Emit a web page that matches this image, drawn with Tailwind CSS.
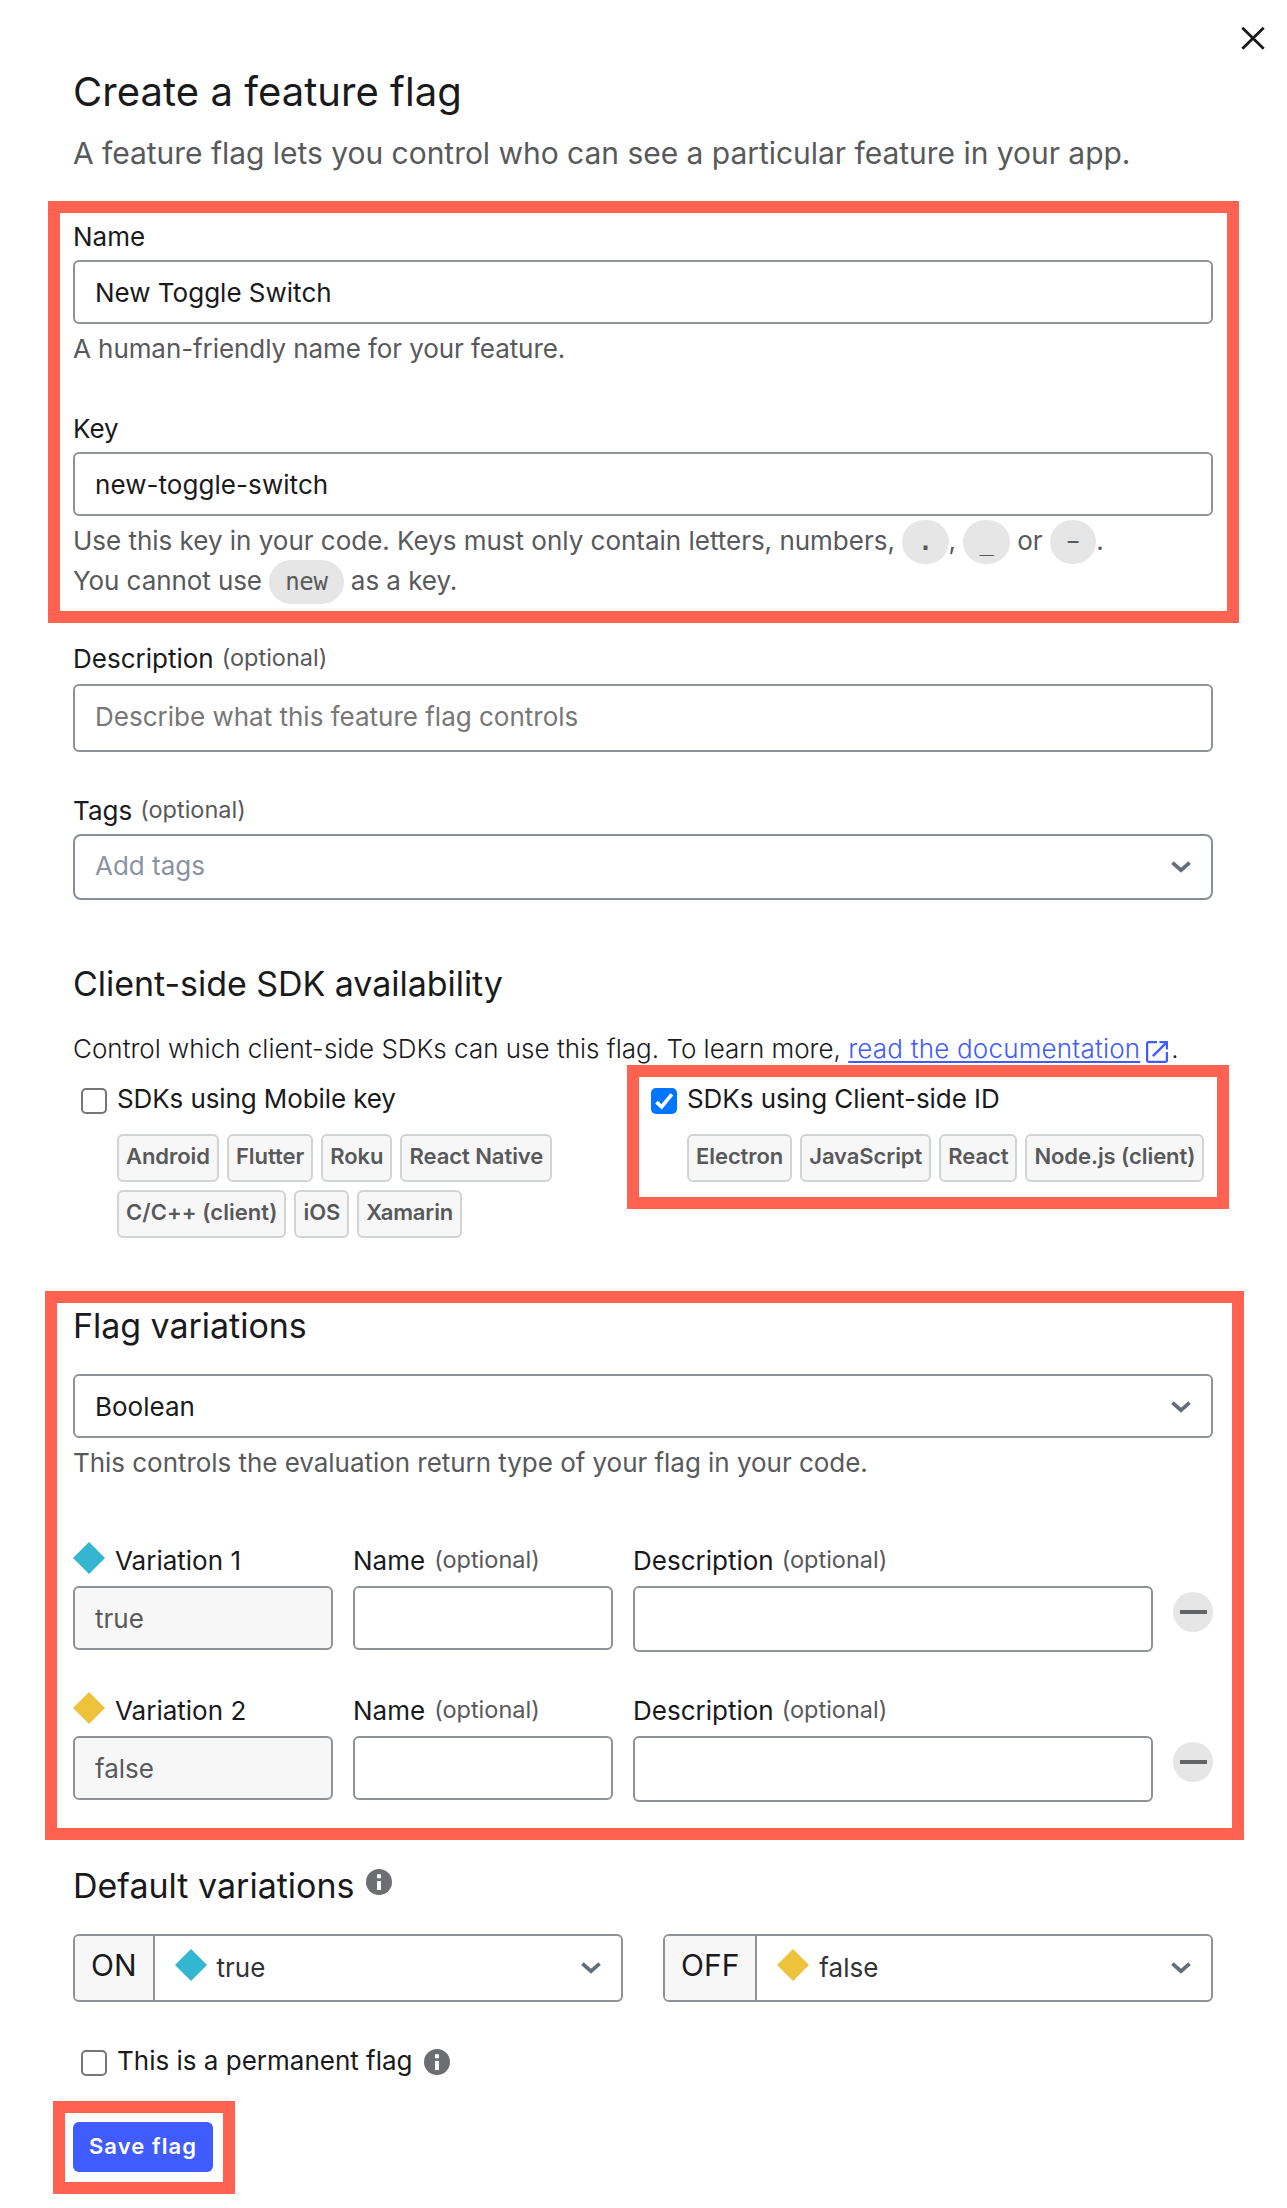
<!DOCTYPE html>
<html lang="en">
<head>
<meta charset="utf-8">
<title>Create a feature flag</title>
<script src="https://cdn.jsdelivr.net/npm/@tailwindcss/browser@4"></script>
</head>
<body class="relative h-[2208px] w-[1287px] overflow-hidden bg-white font-['Inter',sans-serif] text-[26px] leading-[31px] text-[#1a1a1c]">

<!-- Shared icons -->
<svg class="hidden">
  <symbol id="chevron" viewBox="0 0 20 12"><path d="M1.4 1.6 10 9.2l8.6-7.6" fill="none" stroke="#646d7a" stroke-width="3.7"/></symbol>
  <symbol id="diamond" viewBox="0 0 32 32"><path d="M16 0 32 16 16 32 0 16z" fill="currentColor"/></symbol>
  <symbol id="info" viewBox="0 0 26 26"><circle cx="13" cy="13" r="13" fill="#6d6e72"/><path d="M11 5.2h4v4h-4zM11 12h4v9h-4z" fill="#fff"/></symbol>
</svg>

<button class="absolute top-[26px] left-[1240px] h-[25px] w-[26px]" aria-label="Close">
  <svg class="block h-full w-full" viewBox="0 0 26 25"><path d="M2.3 1.8 23.7 22.7M23.7 1.8 2.3 22.7" stroke="#1a1a1c" stroke-width="2.8" fill="none"/></svg>
</button>

<main class="flex w-[1213px] flex-col pt-[67px] pl-[73px]">
  <h1 class="text-[40px] leading-[49px] tracking-[0.05px]">Create a feature flag</h1>
  <p class="mt-[19px] text-[30px] leading-9 tracking-[-0.03px] text-[#58595b]">A feature flag lets you control who can see a particular feature in your app.</p>

  <label class="mt-[50px]">Name</label>
  <input class="mt-2 h-16 rounded-md border-2 border-[#8f9398] bg-white px-5 pt-px" value="New Toggle Switch">
  <p class="mt-[9px] tracking-[-0.08px] text-[#58595b]">A human-friendly name for your feature.</p>

  <label class="mt-[49px]">Key</label>
  <input class="mt-2 h-16 rounded-md border-2 border-[#8f9398] bg-white px-5 pt-px tracking-[0.06px]" value="new-toggle-switch">
  <p class="mt-[5px] h-[79px] leading-10 whitespace-nowrap text-[#58595b]"><span class="tracking-[-0.015px]">Use this key in your code. Keys must only contain letters, numbers, </span><code class="rounded-full bg-[#e6e6e6] px-4 py-2 font-['DejaVu_Sans_Mono',monospace] text-2xl leading-0 font-bold">.</code>, <code class="rounded-full bg-[#e6e6e6] px-4 py-2 font-['DejaVu_Sans_Mono',monospace] text-2xl leading-0">_</code> or <code class="rounded-full bg-[#e6e6e6] px-4 py-2 font-['DejaVu_Sans_Mono',monospace] text-2xl leading-0"><span class="inline-block -translate-y-px scale-x-[1.75]">-</span></code>.<br><span class="tracking-[-0.08px]">You cannot use </span><code class="rounded-full bg-[#e6e6e6] px-4 py-2 font-['DejaVu_Sans_Mono',monospace] text-2xl leading-0 tracking-[-0.3px]">new</code><span class="tracking-[-0.05px]"> as a key.</span></p>

  <label class="mt-[43px] flex gap-2">Description <span class="text-[23.5px] leading-[29px] text-[#58595b]">(optional)</span></label>
  <input class="mt-2.5 h-[68px] rounded-md border-2 border-[#8f9398] bg-white px-5 pb-[3px] placeholder:text-[#777]" placeholder="Describe what this feature flag controls">

  <label class="mt-[43px] flex gap-2">Tags <span class="text-[23.5px] leading-[29px] text-[#58595b]">(optional)</span></label>
  <div class="mt-2 flex h-[66px] items-center justify-between rounded-lg border-2 border-[#868f9c] pr-5 pl-5">
    <span class="pb-[3px] text-[#8b93a1]">Add tags</span>
    <svg class="h-3 w-5"><use href="#chevron"/></svg>
  </div>

  <h2 class="mt-[63px] text-[34px] leading-[41px] tracking-[-0.04px]">Client-side SDK availability</h2>
  <p class="mt-[29px] h-[31px] font-light whitespace-nowrap">Control which client-side SDKs can use this flag. To learn more, <a class="tracking-[0.2px] text-[#405bff] underline decoration-2 underline-offset-[3px]">read the documentation</a><svg class="ml-1.5 inline-block h-[22px] w-[22px] align-[-5px]" viewBox="3 3 18 18"><path fill="#405bff" d="M19.2 19.2H4.8V4.8H12V3H5a2 2 0 0 0-2 2v14a2 2 0 0 0 2 2h14c1.1 0 2-.9 2-2v-7h-1.800zM14 3v1.800h3.800L7.900 14.700l1.400 1.400L19.200 6.200V10H21V3z"/></svg><span class="ml-[3px]">.</span></p>

  <div class="mt-[19px] grid grid-cols-2">
    <div>
      <label class="flex gap-2.5 pl-2"><span class="mt-[5px] h-[26px] w-[26px] rounded-[5px] border-2 border-[#767676]"></span><span class="tracking-[-0.1px]">SDKs using Mobile key</span></label>
      <div class="mt-5 flex flex-wrap gap-2 pl-11 text-[22px] leading-[26px] font-semibold tracking-[-0.05px] text-[#58595b]">
        <span class="h-12 rounded-md border-2 border-[#d1d4d4] bg-[#f7f7f7] px-[7px] pt-[7px]">Android</span>
        <span class="h-12 rounded-md border-2 border-[#d1d4d4] bg-[#f7f7f7] px-[7px] pt-[7px]">Flutter</span>
        <span class="h-12 rounded-md border-2 border-[#d1d4d4] bg-[#f7f7f7] px-[7px] pt-[7px]">Roku</span>
        <span class="h-12 rounded-md border-2 border-[#d1d4d4] bg-[#f7f7f7] px-[7px] pt-[7px]">React Native</span>
        <span class="h-12 rounded-md border-2 border-[#d1d4d4] bg-[#f7f7f7] px-[7px] pt-[7px] tracking-[0.05px]">C/C++ (client)</span>
        <span class="h-12 rounded-md border-2 border-[#d1d4d4] bg-[#f7f7f7] px-[7px] pt-[7px]">iOS</span>
        <span class="h-12 rounded-md border-2 border-[#d1d4d4] bg-[#f7f7f7] px-[7px] pt-[7px] tracking-[-0.15px]">Xamarin</span>
      </div>
    </div>
    <div>
      <label class="flex gap-2.5 pl-2"><span class="mt-[5px] h-[26px] w-[26px] rounded-[5px] bg-[#0075ff]"><svg class="block" viewBox="0 0 26 26"><path d="M5.400 14.200l5.200 4.700L20.800 6.300" fill="none" stroke="#fff" stroke-width="3.700"/></svg></span><span class="tracking-[-0.06px]">SDKs using Client-side ID</span></label>
      <div class="mt-5 flex flex-wrap gap-2 pl-11 text-[22px] leading-[26px] font-semibold tracking-[-0.07px] text-[#58595b]">
        <span class="h-12 rounded-md border-2 border-[#d1d4d4] bg-[#f7f7f7] px-[7px] pt-[7px]">Electron</span>
        <span class="h-12 rounded-md border-2 border-[#d1d4d4] bg-[#f7f7f7] px-[7px] pt-[7px]">JavaScript</span>
        <span class="h-12 rounded-md border-2 border-[#d1d4d4] bg-[#f7f7f7] px-[7px] pt-[7px]">React</span>
        <span class="h-12 rounded-md border-2 border-[#d1d4d4] bg-[#f7f7f7] px-[7px] pt-[7px]">Node.js (client)</span>
      </div>
    </div>
  </div>

  <h2 class="mt-[67px] text-[34px] leading-[41px] tracking-[-0.04px]">Flag variations</h2>
  <div class="mt-7 flex h-16 items-center justify-between rounded-md border-2 border-[#8f9398] px-5 pt-px">
    <span>Boolean</span>
    <svg class="h-3 w-5"><use href="#chevron"/></svg>
  </div>
  <p class="mt-[9px] tracking-[-0.04px] text-[#58595b]">This controls the evaluation return type of your flag in your code.</p>

  <div class="mt-[67px] flex gap-5">
    <div class="flex w-[260px] flex-col">
      <label class="flex h-[31px] gap-2.5"><svg class="-mt-[3px] h-8 w-8 text-[#34b5d0]"><use href="#diamond"/></svg>Variation 1</label>
      <input class="mt-2.5 h-16 rounded-md border-2 border-[#8f9398] bg-[#f7f7f7] px-5 pt-px text-[#58595b]" value="true">
    </div>
    <div class="flex w-[260px] flex-col">
      <label class="flex gap-[9px]">Name <span class="text-[23.5px] leading-[29px] text-[#58595b]">(optional)</span></label>
      <input class="mt-2.5 h-16 rounded-md border-2 border-[#8f9398] bg-white px-5">
    </div>
    <div class="flex w-[520px] flex-col">
      <label class="flex gap-2">Description <span class="text-[23.5px] leading-[29px] text-[#58595b]">(optional)</span></label>
      <input class="mt-2.5 h-[66px] rounded-md border-2 border-[#8f9398] bg-white px-5">
    </div>
    <button class="mt-[47px] flex h-10 w-10 items-center justify-center rounded-full bg-[#e6e6e6]" aria-label="Remove"><span class="h-1 w-[27px] bg-[#636466]"></span></button>
  </div>

  <div class="mt-[43px] flex gap-5">
    <div class="flex w-[260px] flex-col">
      <label class="flex h-[31px] gap-2.5"><svg class="-mt-[3px] h-8 w-8 text-[#edc23c]"><use href="#diamond"/></svg>Variation 2</label>
      <input class="mt-2.5 h-16 rounded-md border-2 border-[#8f9398] bg-[#f7f7f7] px-5 pt-px text-[#58595b]" value="false">
    </div>
    <div class="flex w-[260px] flex-col">
      <label class="flex gap-[9px]">Name <span class="text-[23.5px] leading-[29px] text-[#58595b]">(optional)</span></label>
      <input class="mt-2.5 h-16 rounded-md border-2 border-[#8f9398] bg-white px-5">
    </div>
    <div class="flex w-[520px] flex-col">
      <label class="flex gap-2">Description <span class="text-[23.5px] leading-[29px] text-[#58595b]">(optional)</span></label>
      <input class="mt-2.5 h-[66px] rounded-md border-2 border-[#8f9398] bg-white px-5">
    </div>
    <button class="mt-[47px] flex h-10 w-10 items-center justify-center rounded-full bg-[#e6e6e6]" aria-label="Remove"><span class="h-1 w-[27px] bg-[#636466]"></span></button>
  </div>

  <div class="mt-[63px] flex gap-[11px]">
    <h2 class="text-[34px] leading-[41px]">Default variations</h2>
    <svg class="mt-1 h-[26px] w-[26px]"><use href="#info"/></svg>
  </div>
  <div class="mt-7 grid grid-cols-2 gap-10">
    <div class="flex h-[68px] overflow-hidden rounded-md border-2 border-[#8f9398]">
      <span class="flex items-center border-r-2 border-[#8f9398] bg-[#f7f7f7] px-4 pb-1.5 text-[30px] leading-9">ON</span>
      <svg class="mt-[13px] ml-5 h-8 w-8 text-[#34b5d0]"><use href="#diamond"/></svg>
      <span class="mt-4 ml-2.5 grow text-[#333336]">true</span>
      <svg class="mt-[26px] mr-5 h-3 w-5"><use href="#chevron"/></svg>
    </div>
    <div class="flex h-[68px] overflow-hidden rounded-md border-2 border-[#8f9398]">
      <span class="flex items-center border-r-2 border-[#8f9398] bg-[#f7f7f7] px-4 pb-1.5 text-[30px] leading-9">OFF</span>
      <svg class="mt-[13px] ml-5 h-8 w-8 text-[#edc23c]"><use href="#diamond"/></svg>
      <span class="mt-4 ml-2.5 grow text-[#333336]">false</span>
      <svg class="mt-[26px] mr-5 h-3 w-5"><use href="#chevron"/></svg>
    </div>
  </div>

  <label class="mt-[43px] flex pl-2"><span class="mt-[5px] mr-2.5 h-[26px] w-[26px] rounded-[5px] border-2 border-[#767676]"></span>This is a permanent flag<svg class="mt-1 ml-[11px] h-[26px] w-[26px]"><use href="#info"/></svg></label>

  <button class="mt-[46px] h-[50px] w-[140px] rounded-md bg-[#405bff] pb-0.5 text-[22px] leading-[26px] font-semibold tracking-[1.1px] text-white">Save flag</button>
</main>

<!-- Callout frames laid over the form -->
<div class="pointer-events-none absolute top-[201px] left-12 h-[422px] w-[1191px] border-12 border-[#ff6250]"></div>
<div class="pointer-events-none absolute top-[1065px] left-[627px] h-36 w-[602px] border-12 border-[#ff6250]"></div>
<div class="pointer-events-none absolute top-[1291px] left-[45px] h-[549px] w-[1199px] border-12 border-[#ff6250]"></div>
<div class="pointer-events-none absolute top-[2101px] left-[53px] h-[93px] w-[182px] border-12 border-[#ff6250]"></div>
</body>
</html>
